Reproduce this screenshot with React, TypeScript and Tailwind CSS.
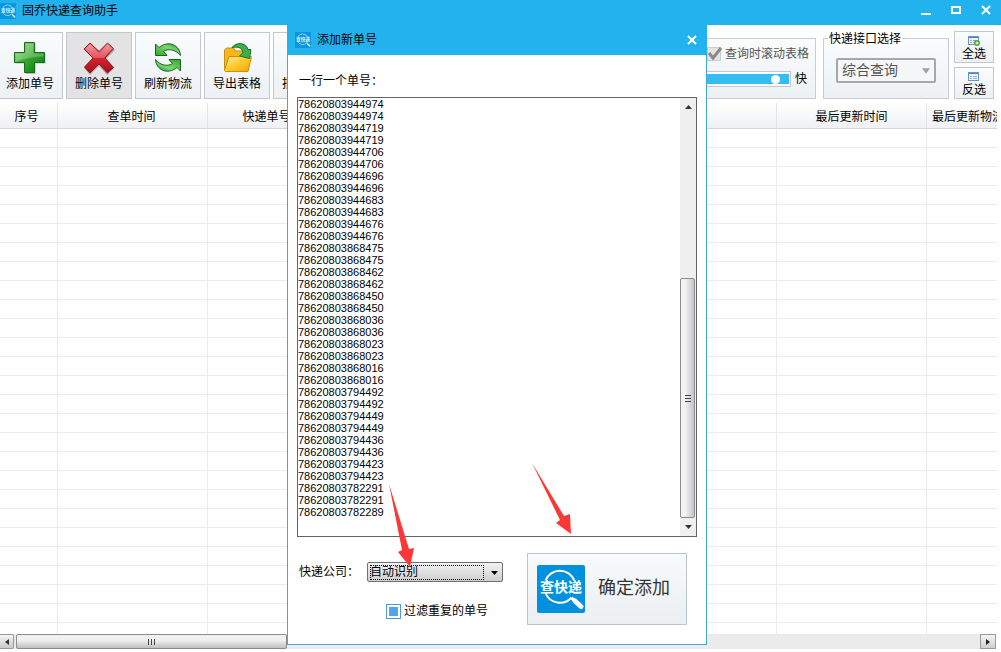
import { useId, useState } from 'react';
import type { ReactNode } from 'react';

const PREFIX = '78620803';

const SUFFIXES = [
  '944974', '944719', '944706', '944696', '944683', '944676',
  '868475', '868462', '868450', '868036', '868023', '868016',
  '794492', '794449', '794436', '794423', '782291',
];

const INITIAL_NUMBERS = [...SUFFIXES.flatMap((s) => [PREFIX + s, PREFIX + s]), PREFIX + '782289'].join('\n');

const ROWS = Array.from({ length: 26 }, (_, i) => i);

function Logo({ className }: { className: string }) {
  return (
    <svg viewBox="0 0 48 48" className={className} aria-hidden="true">
      <rect width="48" height="48" rx="2" fill="#0091de" />
      <path d="M8.5 15.5a15.5 15.5 0 0 1 28.8 0M8.5 28a15.5 15.5 0 0 0 26 4.5" fill="none" stroke="#fff" strokeWidth="2" />
      <path d="M34.5 33l3.5 3" stroke="#fff" strokeWidth="3" />
      <path d="M38 36l6 5.500" stroke="#fff" strokeWidth="5" strokeLinecap="round" />
      <text x="24" y="27" textAnchor="middle" fontSize="14" fontWeight="700" fill="#fff">
        查快递
      </text>
    </svg>
  );
}

function AddIcon() {
  return (
    <svg width="34" height="34" viewBox="0 0 34 34" aria-hidden="true">
      <defs>
        <linearGradient id="plus" x1="0" y1="0" x2="1" y2="1">
          <stop offset="0" stopColor="#8fdc7c" />
          <stop offset="0.5" stopColor="#35a52e" />
          <stop offset="1" stopColor="#07780c" />
        </linearGradient>
      </defs>
      <path d="M12.500 2h10v10.500h10v10h-10V33h-10V22.500h-10v-10h10z" fill="#000" opacity="0.25" />
      <path d="M11.500 1.500h10v10h10v10h-10v10h-10v-10h-10v-10h10z" fill="url(#plus)" stroke="#176c18" />
      <path d="M12.500 2.500h8v10h10v3q-13 0-28 5v-8h10z" fill="#fff" opacity="0.25" />
    </svg>
  );
}

function DeleteIcon() {
  return (
    <svg width="34" height="34" viewBox="0 0 34 34" aria-hidden="true">
      <defs>
        <linearGradient id="cross" x1="0" y1="0" x2="0" y2="1">
          <stop offset="0" stopColor="#f0858a" />
          <stop offset="0.5" stopColor="#d82432" />
          <stop offset="1" stopColor="#a50d1c" />
        </linearGradient>
      </defs>
      <path d="M9 3l9 8 8-8 7 6-9 9 8 9-7 7-8-9-9 9-6-7 9-9-8-9z" fill="#000" opacity="0.25" />
      <path d="M8 2l9 8.500L25.500 2l6 5.500L23 17l8.500 9.500-6 5.500L17 23l-9 9-5.500-6 8.500-9-9-9z" fill="url(#cross)" stroke="#921522" />
      <path d="M8 3.500l9 9 8.500-9 4.500 4-8 9.500q-10 0-11 0L3.500 8z" fill="#fff" opacity="0.22" />
    </svg>
  );
}

function RefreshIcon() {
  const arrow = 'M4.500 3v11.500h11.500l-3.500-4c4-3 12-2.500 17 4C29 4.500 18-1.500 8 6.500z';

  return (
    <svg width="34" height="34" viewBox="0 0 34 34" aria-hidden="true">
      <defs>
        <linearGradient id="spin" x1="0" y1="1" x2="1" y2="0">
          <stop offset="0" stopColor="#2fa42c" />
          <stop offset="0.6" stopColor="#7fd672" />
          <stop offset="1" stopColor="#1d8a2b" />
        </linearGradient>
      </defs>
      <g fill="url(#spin)" stroke="#17651e" strokeLinejoin="round">
        <path d={arrow} />
        <path d={arrow} transform="rotate(180 17 16.500)" />
      </g>
    </svg>
  );
}

function ExportIcon() {
  return (
    <svg width="34" height="34" viewBox="0 0 34 34" aria-hidden="true">
      <defs>
        <linearGradient id="folder" x1="0" y1="0" x2="1" y2="1">
          <stop offset="0" stopColor="#fff0a0" />
          <stop offset="0.5" stopColor="#fdc92b" />
          <stop offset="1" stopColor="#f0a400" />
        </linearGradient>
      </defs>
      <path d="M4.500 29V9l2-2h7l2 3H27v8" fill="#f8b818" stroke="#cf8e0c" />
      <path d="M4.500 29.500L9 15.500h22.500L28 30.500H5.500z" fill="url(#folder)" stroke="#cf8e0c" strokeLinejoin="round" />
      <path d="M12 6.500C16 1 26 1 28 8.500h3L29.500 17.500 19.500 15l3.500-3.500C22 6.500 18 5.500 12 6.500z" fill="#3fae4a" stroke="#17742a" strokeLinejoin="round" />
    </svg>
  );
}

function GridIcon({ plus }: { plus?: boolean }) {
  return (
    <svg width="12" height="10" viewBox="0 0 12 10" aria-hidden="true">
      <rect x="0.5" y="0.5" width="10" height="8" fill="#eef4ff" stroke="#6d93cc" />
      <path d="M1 1.500h9" stroke="#4f7fc6" />
      <path d="M2 4.500h2M5 4.500h4M2 6.500h2M5 6.500h4" stroke="#8fb0df" />
      {plus && (
        <>
          <circle cx="9" cy="7" r="3" fill="#56a639" />
          <path d="M9 5.500v3M7.500 7h3" stroke="#fff" />
        </>
      )}
    </svg>
  );
}

function CloseIcon() {
  return (
    <svg width="10" height="10" viewBox="0 0 10 10" stroke="#fff" strokeWidth="2" aria-hidden="true">
      <path d="M1 1l8 8M9 1L1 9" />
    </svg>
  );
}

function ToolButton({ icon, label, active }: { icon: ReactNode; label: string; active?: boolean }) {
  return (
    <button
      type="button"
      className={`flex h-[67px] w-[66px] shrink-0 flex-col items-center border border-[#c3c7d3] pt-2 ${
        active ? 'bg-[#e3e3e3]' : 'bg-linear-to-b from-[#fafcfd] to-[#edf1f4]'
      }`}
    >
      {icon}
      <span className="leading-[18px] whitespace-nowrap">{label}</span>
    </button>
  );
}

function TitleBar() {
  return (
    <header className="flex h-[25px] items-center bg-[#22b3ee] pr-[10px]">
      <Logo className="mb-1 h-4 w-4 opacity-80" />
      <h1 className="ml-1.5 pb-1 text-xs">固乔快递查询助手</h1>
      <div className="ml-auto flex items-center gap-5 pb-1.5">
        <button type="button" aria-label="最小化" className="flex h-[10px] w-[10px] items-end">
          <span className="h-0.5 w-[10px] bg-white" />
        </button>
        <button type="button" aria-label="最大化" className="h-2 w-[10px] border-2 border-white" />
        <button type="button" aria-label="关闭">
          <CloseIcon />
        </button>
      </div>
    </header>
  );
}

function Toolbar() {
  return (
    <div className="flex h-[78px] items-start pt-[7px] pr-[7px]">
      <div className="-ml-[3px] flex gap-[3px]">
        <ToolButton icon={<AddIcon />} label="添加单号" />
        <ToolButton icon={<DeleteIcon />} label="删除单号" active />
        <ToolButton icon={<RefreshIcon />} label="刷新物流" />
        <ToolButton icon={<ExportIcon />} label="导出表格" />
        <ToolButton icon={<ExportIcon />} label="批量导入" />
      </div>

      <div className="mt-[6px] ml-auto flex h-[61px] w-[200px] shrink-0 flex-col items-end border border-[#c8ccd8] bg-linear-to-b from-[#fafcfd] to-[#edf1f4] pt-1.5 pr-1.5">
        <label className="flex items-center gap-1 text-[#555]">
          <span className="relative flex">
            <input type="checkbox" defaultChecked className="h-[14px] w-[14px] appearance-none border border-[#ccc] bg-[#e4e4e4]" />
            <svg width="16" height="14" viewBox="0 0 16 14" className="pointer-events-none absolute" aria-hidden="true">
              <path d="M2 6l4 5 8-10" fill="none" stroke="#8a8a8a" strokeWidth="3" />
            </svg>
          </span>
          <span className="leading-[18px]">查询时滚动表格</span>
        </label>
        <label className="mt-2 flex items-center gap-1 pr-0.5">
          <span className="flex h-4 w-[160px] items-center border border-[#c3c7d3] bg-white px-px">
            <input
              type="range"
              defaultValue={94}
              className="h-[10px] w-full appearance-none bg-[#33bdf0] [&::-webkit-slider-thumb]:h-[9px] [&::-webkit-slider-thumb]:w-[9px] [&::-webkit-slider-thumb]:appearance-none [&::-webkit-slider-thumb]:rounded-full [&::-webkit-slider-thumb]:bg-white"
            />
          </span>
          <span className="leading-4">快</span>
        </label>
      </div>

      <div className="relative mt-[6px] ml-[7px] flex h-[61px] w-[126px] shrink-0 border border-[#c8ccd8] bg-linear-to-b from-[#fafcfd] to-[#edf1f4] px-3 pt-[19px]">
        <label htmlFor="api" className="absolute -top-2 left-1 bg-white px-px leading-4">
          快递接口选择
        </label>
        <div className="relative h-[25px] w-[100px]">
          <select id="api" className="h-full w-full appearance-none rounded-xs border-2 border-[#a4a7ac] bg-[#f5f7f8] pb-0.5 pl-1 text-sm leading-5 text-[#555]">
            <option>综合查询</option>
          </select>
          <svg width="8" height="6" viewBox="0 0 9 6" className="pointer-events-none absolute top-[10px] right-[6px]" aria-hidden="true">
            <path d="M0 0h9L4.500 6z" fill="#a0a0a0" />
          </svg>
        </div>
      </div>

      <div className="-mt-px ml-[5px] flex shrink-0 flex-col gap-1">
        <button type="button" className="flex h-8 w-10 flex-col items-center border border-[#c3c7d3] bg-linear-to-b from-[#fafcfd] to-[#edf1f4] pt-1">
          <GridIcon plus />
          <span className="leading-4">全选</span>
        </button>
        <button type="button" className="flex h-8 w-10 flex-col items-center border border-[#c3c7d3] bg-linear-to-b from-[#fafcfd] to-[#edf1f4] pt-1">
          <GridIcon />
          <span className="leading-4">反选</span>
        </button>
      </div>
    </div>
  );
}

function OrderTable() {
  return (
    <div className="mr-1 overflow-hidden">
      <table className="w-full table-fixed border-separate border-spacing-0">
        <colgroup>
          <col className="w-[58px]" />
          <col className="w-[150px]" />
          <col className="w-[120px]" />
          <col />
          <col className="w-[150px]" />
          <col className="w-[70px]" />
        </colgroup>
        <thead>
          <tr className="h-[26px] bg-linear-to-b from-white to-[#eff0f3] [&>th]:border-r [&>th]:border-b [&>th]:border-r-[#e2e4e8] [&>th]:border-b-[#d4d6da] [&>th]:p-0 [&>th]:pt-[3px] [&>th]:font-normal [&>th]:whitespace-nowrap">
            <th>
              <span className="pr-1">序号</span>
            </th>
            <th>
              <span className="pr-0.5">查单时间</span>
            </th>
            <th>
              <span className="pr-0.5">快递单号</span>
            </th>
            <th>物流状态</th>
            <th>最后更新时间</th>
            <th className="overflow-hidden border-r-0! text-left">
              <span className="pl-[5px]">最后更新物流</span>
            </th>
          </tr>
        </thead>
        <tbody>
          {ROWS.map((row) => (
            <tr key={row} className="h-[19px] [&>td]:border-r [&>td]:border-b [&>td]:border-[#ececec] [&>td]:p-0">
              <td />
              <td />
              <td />
              <td />
              <td />
              <td className="border-r-0!" />
            </tr>
          ))}
          <tr className="h-[11px] [&>td]:border-r [&>td]:border-[#ececec] [&>td]:p-0">
            <td />
            <td />
            <td />
            <td />
            <td />
            <td className="border-r-0!" />
          </tr>
        </tbody>
      </table>
    </div>
  );
}

function HorizontalScrollbar() {
  return (
    <div className="mr-[5px] flex h-[15px] gap-0.5 bg-[#ebebeb]">
      <button type="button" aria-label="向左" className="flex w-[14px] items-center justify-center rounded-r-xs border border-l-0 border-[#999] bg-linear-to-b from-[#f5f5f5] to-[#c9c9c9]">
        <svg width="4" height="6" viewBox="0 0 4 6" aria-hidden="true">
          <path d="M4 0v6L0 3z" fill="#333" />
        </svg>
      </button>
      <div className="flex w-[271px] items-center justify-center gap-0.5 rounded-xs border border-[#8b8b8b] bg-linear-to-b from-[#f0f0f0] from-40% to-[#bfc0c3]">
        <span className="h-1.5 w-px bg-[#444]" />
        <span className="h-1.5 w-px bg-[#444]" />
        <span className="h-1.5 w-px bg-[#444]" />
      </div>
      <button type="button" aria-label="向右" className="ml-auto flex w-4 items-center justify-center border border-[#999] bg-linear-to-b from-[#f5f5f5] to-[#cfcfcf]">
        <svg width="4" height="6" viewBox="0 0 4 6" aria-hidden="true">
          <path d="M0 0v6l4-3z" fill="#222" />
        </svg>
      </button>
    </div>
  );
}

function AddDialog() {
  const [numbers, setNumbers] = useState(INITIAL_NUMBERS);
  const id = useId();

  return (
    <section role="dialog" aria-label="添加新单号" className="absolute top-[25px] left-[287px] w-[420px] border border-[#3fa9dc] bg-white pb-[19px]">
      <header className="-mx-px -mt-px flex h-[30px] items-center bg-[#22b3ee] pr-[10px] pl-2">
        <Logo className="h-4 w-4 opacity-80" />
        <h2 className="ml-1.5 text-xs">添加新单号</h2>
        <button type="button" aria-label="关闭" className="ml-auto">
          <CloseIcon />
        </button>
      </header>

      <div className="px-[9px] pt-[17px]">
        <label htmlFor={`${id}-numbers`} className="ml-0.5 block h-[25px] leading-[18px]">
          一行一个单号：
        </label>
        <div className="flex h-[440px] border border-[#646464]">
          <textarea
            id={`${id}-numbers`}
            value={numbers}
            onChange={(e) => setNumbers(e.target.value)}
            className="min-w-0 flex-1 resize-none overflow-hidden font-['Liberation_Sans',sans-serif] text-[11px] leading-3 outline-none"
          />
          <div className="flex w-4 flex-col items-center bg-[#efefef]">
            <svg width="7" height="4" viewBox="0 0 7 4" className="mt-[7px]" aria-hidden="true">
              <path d="M0 4h7L3.500 0z" fill="#333" />
            </svg>
            <div className="mt-auto mr-px flex h-[240px] w-[15px] flex-col items-center justify-center gap-0.5 rounded-xs border border-[#8b8b8b] bg-linear-to-r from-[#f3f3f3] from-30% to-[#c4c4c9]">
              <span className="h-px w-1.5 bg-[#444]" />
              <span className="h-px w-1.5 bg-[#444]" />
              <span className="h-px w-1.5 bg-[#444]" />
            </div>
            <svg width="7" height="4" viewBox="0 0 7 4" className="my-[7px]" aria-hidden="true">
              <path d="M0 0h7L3.500 4z" fill="#333" />
            </svg>
          </div>
        </div>

        <div className="mt-4 flex justify-between pr-[10px]">
          <div className="pt-[9px]">
            <div className="flex items-center">
              <label htmlFor={`${id}-company`} className="ml-0.5 w-[68px]">
                快递公司：
              </label>
              <div className="relative h-5 w-[136px]">
                <select
                  id={`${id}-company`}
                  className="h-full w-full appearance-none rounded-xs border border-[#707070] bg-linear-to-b from-[#f2f2f2] to-[#cfcfcf] pl-0.5 text-xs leading-4"
                >
                  <option>自动识别</option>
                </select>
                <span className="pointer-events-none absolute top-[3px] left-[3px] h-[15px] w-[114px] border border-dotted border-black" />
                <svg width="7" height="4" viewBox="0 0 7 4" className="pointer-events-none absolute top-[9px] right-[5px]" aria-hidden="true">
                  <path d="M0 0h7L3.500 4z" fill="#000" />
                </svg>
              </div>
            </div>
            <label className="mt-[21px] ml-[89px] flex items-center gap-[3px]">
              <input
                type="checkbox"
                defaultChecked
                className="h-[15px] w-[15px] appearance-none border border-[#4c9be0] bg-white p-0.5 before:block before:h-[9px] before:w-[9px] checked:before:bg-[#55a3e8]"
              />
              <span>过滤重复的单号</span>
            </label>
          </div>
          <button type="button" className="flex h-[72px] w-[160px] items-center gap-[13px] border border-[#bcc5cc] bg-linear-to-b from-[#f8fafb] to-[#ebeff1] pl-[9px]">
            <Logo className="h-12 w-12" />
            <span className="pb-0.5 text-lg text-[#333]">确定添加</span>
          </button>
        </div>
      </div>

      <svg viewBox="0 0 30 90" className="pointer-events-none absolute top-[455px] left-[99px] h-[90px] w-[30px]" fill="#fb3838" aria-hidden="true">
        <path d="M2 3l20 65 5-1-4 19-12-15 4-2z" />
      </svg>
      <svg viewBox="0 0 44 74" className="pointer-events-none absolute top-[436px] left-[243px] h-[74px] w-[44px]" fill="#fb3838" aria-hidden="true">
        <path d="M1 1l32 53 6-2 1 20-15-11 4-3z" />
      </svg>
    </section>
  );
}

export default function App() {
  return (
    <main className="relative min-h-screen overflow-hidden bg-white font-['Liberation_Sans','Noto_Sans_CJK_SC',sans-serif] text-xs text-black">
      <TitleBar />
      <Toolbar />
      <OrderTable />
      <HorizontalScrollbar />
      <AddDialog />
    </main>
  );
}
